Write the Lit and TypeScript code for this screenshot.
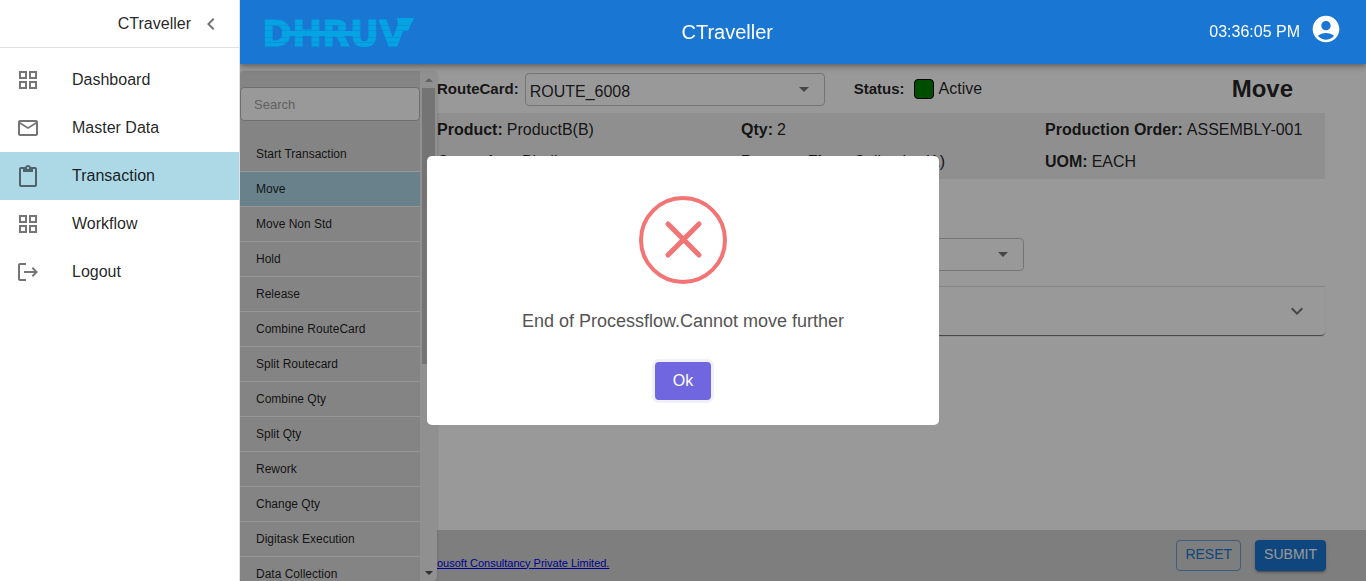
import { LitElement, html, css, svg } from "lit";
import { customElement, state } from "lit/decorators.js";
import { classMap } from "lit/directives/class-map.js";

const ICONS: Record<string, string> = {
  grid: "M3 3v8h8V3H3zm6 6H5V5h4v4zm-6 4v8h8v-8H3zm6 6H5v-4h4v4zm4-16v8h8V3h-8zm6 6h-4V5h4v4zm-6 4v8h8v-8h-8zm6 6h-4v-4h4v4z",
  mail: "M20 4H4c-1.1 0-1.99.9-1.99 2L2 18c0 1.1.9 2 2 2h16c1.1 0 2-.9 2-2V6c0-1.1-.9-2-2-2zm0 14H4V8l8 5 8-5v10zm-8-7L4 6h16l-8 5z",
  clipboard: "M19 3h-4.18C14.4 1.84 13.3 1 12 1c-1.3 0-2.4.84-2.82 2H5c-1.1 0-2 .9-2 2v16c0 1.1.9 2 2 2h14c1.1 0 2-.9 2-2V5c0-1.1-.9-2-2-2zm-7 0c.55 0 1 .45 1 1s-.45 1-1 1-1-.45-1-1 .45-1 1-1zm7 18H5V5h2v3h10V5h2v16z",
  logout: "M10 3H4c-1.1 0-2 .9-2 2v14c0 1.1.9 2 2 2h6v-2H4V5h6V3zM17 7l-1.4 1.4 2.6 2.6H8v2h10.2l-2.6 2.6L17 17l5-5z",
  left: "M15.41 7.41 14 6l-6 6 6 6 1.41-1.41L10.83 12z",
  down: "M16.59 8.59 12 13.17 7.41 8.59 6 10l6 6 6-6z",
  account: "M12 2C6.48 2 2 6.48 2 12s4.48 10 10 10 10-4.48 10-10S17.52 2 12 2zm0 4c1.93 0 3.5 1.57 3.5 3.5S13.93 13 12 13s-3.5-1.57-3.5-3.5S10.07 6 12 6zm0 14c-2.03 0-4.43-.82-6.14-2.88C7.55 15.8 9.68 15 12 15s4.45.8 6.14 2.12C16.43 19.18 14.03 20 12 20z",
};

const icon = (name: string, size = 24) => html`<svg
  width=${size} height=${size} viewBox="0 0 24 24" fill="currentColor" aria-hidden="true"
>${svg`<path d=${ICONS[name]}></path>`}</svg>`;

const NAV = [
  ["grid", "Dashboard"],
  ["mail", "Master Data"],
  ["clipboard", "Transaction"],
  ["grid", "Workflow"],
  ["logout", "Logout"],
];

const TRANSACTIONS = [
  "Start Transaction", "Move", "Move Non Std", "Hold", "Release",
  "Combine RouteCard", "Split Routecard", "Combine Qty", "Split Qty",
  "Rework", "Change Qty", "Digitask Execution", "Data Collection",
];

const DETAILS = [
  ["Product:", "ProductB(B)"],
  ["Qty:", "2"],
  ["Production Order:", "ASSEMBLY-001"],
  ["Operation:", "Binding"],
  ["Process Flow:", "Collection(A)"],
  ["UOM:", "EACH"],
];

@customElement("app-root")
export class AppRoot extends LitElement {
  @state() private section = "Transaction";
  @state() private active = "Move";
  @state() private dialogOpen = true;

  static styles = css`
    * { box-sizing: border-box; }
    :host {
      display: grid;
      grid-template-columns: 240px minmax(0, 1fr);
      height: 100vh;
      overflow: hidden;
      background: #fff;
      color: rgba(0, 0, 0, 0.87);
      font: 16px/24px "Liberation Sans", Arial, sans-serif;
    }
    svg { display: block; flex: none; }
    button, input, select { font: inherit; color: inherit; }
    button { cursor: pointer; }
    a { color: inherit; text-decoration: none; }
    ul { list-style: none; margin: 0; padding: 0; }

    .drawer {
      position: relative;
      z-index: 4;
      background: #fff;
      border-right: 1px solid #e0e0e0;
    }
    .drawer-head {
      display: flex;
      align-items: center;
      justify-content: flex-end;
      gap: 8px;
      height: 48px;
      padding-right: 16px;
      border-bottom: 1px solid #e0e0e0;
    }
    .collapse {
      padding: 0;
      border: 0;
      background: none;
      color: rgba(0, 0, 0, 0.54);
    }
    .nav { padding: 8px 0; }
    .nav-link {
      display: flex;
      align-items: center;
      gap: 32px;
      height: 48px;
      padding: 0 16px;
    }
    .nav-link svg { color: rgba(0, 0, 0, 0.54); }
    .selected { background: lightblue; }

    .workspace {
      display: flex;
      flex-direction: column;
      min-height: 0;
    }
    .bar {
      position: relative;
      z-index: 3;
      flex: none;
      display: grid;
      grid-template-columns: 20fr auto 27fr;
      align-items: center;
      height: 64px;
      padding: 0 24px 0 20px;
      background: #1976d2;
      color: #fff;
      box-shadow: 0 2px 4px -1px rgba(0, 0, 0, 0.2),
        0 4px 5px 0 rgba(0, 0, 0, 0.14), 0 1px 10px 0 rgba(0, 0, 0, 0.12);
    }
    .wordmark {
      font: bold 36px "DejaVu Sans", sans-serif;
    }
    .title {
      margin: 0;
      font-size: 20px;
      font-weight: 500;
    }
    .session {
      display: flex;
      align-items: center;
      justify-content: flex-end;
      gap: 10px;
    }
    .account {
      padding: 0 0 6px;
      border: 0;
      background: none;
      color: #fff;
    }

    .body {
      flex: 1;
      min-height: 0;
      display: grid;
      grid-template-columns: 197px minmax(0, 1fr);
      grid-template-rows: minmax(0, 1fr) auto;
    }
    .side {
      grid-area: 1 / 1 / 3 / 2;
      position: relative;
      z-index: 1;
      display: flex;
      margin-top: 7px;
      border-radius: 4px;
      overflow: hidden;
      background: #f1f1f1;
      box-shadow: 0 1px 3px rgba(0, 0, 0, 0.2);
    }
    .side-list {
      width: 180px;
      padding-top: 16px;
      background: #dcdcdc;
      overflow: hidden;
    }
    .search {
      display: block;
      width: 100%;
      height: 34px;
      margin-bottom: 16px;
      padding: 0 13px;
      border: 1px solid #b8b8b8;
      border-radius: 4px;
      background: #fff;
      font-size: 13px;
    }
    .search::placeholder { color: #a2a2a2; opacity: 1; }
    .side-link {
      display: flex;
      align-items: center;
      height: 35px;
      padding: 0 16px;
      border-bottom: 1px solid #fafafa;
      font-size: 12px;
    }
    .track {
      flex: 1;
      display: flex;
      flex-direction: column;
      align-items: center;
      padding: 7px 2px 6px;
    }
    .thumb {
      width: 13px;
      height: 276px;
      margin-top: 6px;
      margin-bottom: auto;
      background: #c1c1c1;
    }
    .arrow-up { color: #a3a3a3; }
    .arrow-down { color: #505050; }

    .content { padding: 9px 41px 0 0; }
    .top {
      display: flex;
      align-items: flex-start;
      height: 33px;
      line-height: 31px;
    }
    .caption {
      font-size: 15px;
      font-weight: bold;
    }
    .picker {
      position: relative;
      display: flex;
      align-items: center;
      justify-content: flex-end;
    }
    .select {
      appearance: none;
      width: 300px;
      height: 33px;
      padding: 4px 32px 0 4px;
      border: 1px solid #c4c4c4;
      border-radius: 4px;
      background: transparent;
      line-height: 24px;
    }
    .caret {
      position: absolute;
      right: 16px;
      color: rgba(0, 0, 0, 0.54);
      pointer-events: none;
    }
    .top .picker { margin-left: 6px; }
    .status {
      display: flex;
      align-items: center;
      margin-left: 29px;
    }
    .lamp {
      width: 20px;
      height: 20px;
      margin: 0 5px 0 9px;
      border: 1px solid #000;
      border-radius: 4px;
      background: green;
    }
    .heading {
      margin: 0 32px 0 auto;
      font-size: 24px;
    }
    .details {
      display: grid;
      grid-template-columns: 1fr 1fr 280px;
      margin: 7px 0 0;
      padding: 1px 0;
      background: #eee;
      line-height: 32px;
    }
    .detail { display: flex; gap: 4px; }
    .detail dt { font-weight: bold; }
    .detail dd { margin: 0; }
    .reason {
      display: flex;
      padding: 59px 0 15px 287px;
    }
    .panel {
      display: flex;
      align-items: center;
      justify-content: flex-end;
      width: 100%;
      height: 49px;
      padding: 0 16px;
      border: 0;
      border-top: 1px solid #dedede;
      border-radius: 0 0 4px 4px;
      background: #fff;
      color: rgba(0, 0, 0, 0.54);
      box-shadow: 0 2px 1px -1px rgba(0, 0, 0, 0.4),
        0 1px 1px 0 rgba(0, 0, 0, 0.28);
    }

    .footer {
      grid-area: 2 / 1 / 3 / 3;
      display: flex;
      align-items: center;
      gap: 14px;
      height: 51px;
      padding: 0 40px 0 197px;
      background: lightgray;
    }
    .company {
      margin: 14px auto 0 0;
      color: #0000ee;
      font-size: 11px;
      line-height: 16px;
      text-decoration: underline;
    }
    .btn {
      height: 31px;
      padding: 0 9px 3px;
      border-radius: 4px;
      font-size: 14px;
      line-height: 20px;
    }
    .outlined {
      padding: 0 8px 3px;
      border: 1px solid rgba(25, 118, 210, 0.6);
      background: transparent;
      color: #1976d2;
    }
    .contained {
      border: 0;
      background: #1976d2;
      color: #fff;
      box-shadow: 0 3px 1px -2px rgba(0, 0, 0, 0.2),
        0 2px 2px 0 rgba(0, 0, 0, 0.14), 0 1px 5px 0 rgba(0, 0, 0, 0.12);
    }

    .backdrop {
      position: fixed;
      inset: 0;
      z-index: 2;
      background: rgba(0, 0, 0, 0.4);
    }
    .stage {
      position: fixed;
      inset: 0;
      z-index: 5;
      display: grid;
      place-items: center;
    }
    .dialog {
      display: flex;
      flex-direction: column;
      align-items: center;
      width: 512px;
      max-width: 100%;
      padding: 40px 16px 25px;
      border-radius: 5px;
      background: #fff;
      color: #545454;
    }
    .message {
      margin: 25px 0 28px;
      font-size: 18px;
      line-height: 25px;
    }
    .ok {
      height: 38px;
      padding: 0 18px;
      border: 0;
      border-radius: 4px;
      outline: none;
      background: #7066e0;
      color: #fff;
      box-shadow: 0 0 0 3px #f0effc;
    }
  `;

  private caret() {
    return html`<svg class="caret" width="10" height="5" viewBox="0 0 10 5" fill="currentColor" aria-hidden="true">
      <path d="M0 0h10L5 5z"></path>
    </svg>`;
  }

  private wordmark() {
    const seams = [25, 30, 37, 42];
    return html`<svg width="164" height="64" viewBox="0 0 164 64" role="img" aria-label="Dhruv">
      <text class="wordmark" x="2" y="46" fill="#04a4e3" stroke="#04a4e3" stroke-width="1">DHRUV</text>
      <path d="M137 18h17l-6 13h-9z" fill="#04a4e3"></path>
      <rect x="22" y="31" width="72" height="5" fill="#04a4e3"></rect>
      ${seams.map((y) => svg`<rect x="0" y=${y} width="164" height="1" fill="#1976d2" opacity="0.4"></rect>`)}
    </svg>`;
  }

  render() {
    return html`
      <aside class="drawer">
        <div class="drawer-head">
          <span>CTraveller</span>
          <button class="collapse" aria-label="Collapse menu">${icon("left")}</button>
        </div>
        <ul class="nav">
          ${NAV.map(([glyph, label]) => html`<li>
            <a
              href="#"
              class=${classMap({ "nav-link": true, selected: label === this.section })}
              @click=${() => (this.section = label)}
            >${icon(glyph)}<span>${label}</span></a>
          </li>`)}
        </ul>
      </aside>

      <div class="workspace">
        <header class="bar">
          ${this.wordmark()}
          <h1 class="title">CTraveller</h1>
          <div class="session">
            <span>03:36:05 PM</span>
            <button class="account" aria-label="Account">${icon("account", 32)}</button>
          </div>
        </header>

        <div class="body">
          <nav class="side" aria-label="Transactions">
            <div class="side-list">
              <input class="search" type="search" placeholder="Search" aria-label="Search" />
              <ul>
                ${TRANSACTIONS.map((name) => html`<li>
                  <a
                    href="#"
                    class=${classMap({ "side-link": true, selected: name === this.active })}
                    @click=${() => (this.active = name)}
                  >${name}</a>
                </li>`)}
              </ul>
            </div>
            <div class="track" aria-hidden="true">
              <svg class="arrow-up" width="8" height="4" viewBox="0 0 8 4" fill="currentColor"><path d="M0 4h8L4 0z"></path></svg>
              <div class="thumb"></div>
              <svg class="arrow-down" width="8" height="4" viewBox="0 0 8 4" fill="currentColor"><path d="M0 0h8L4 4z"></path></svg>
            </div>
          </nav>

          <main class="content">
            <div class="top">
              <label class="caption" for="route">RouteCard:</label>
              <div class="picker">
                <select class="select" id="route"><option>ROUTE_6008</option></select>
                ${this.caret()}
              </div>
              <div class="status">
                <span class="caption">Status:</span>
                <span class="lamp"></span>
                <span>Active</span>
              </div>
              <h2 class="heading">Move</h2>
            </div>
            <dl class="details">
              ${DETAILS.map(([term, value]) => html`<div class="detail"><dt>${term}</dt><dd>${value}</dd></div>`)}
            </dl>
            <div class="reason">
              <div class="picker">
                <select class="select" aria-label="Next operation"><option></option></select>
                ${this.caret()}
              </div>
            </div>
            <button class="panel" aria-label="Expand details">${icon("down")}</button>
          </main>

          <footer class="footer">
            <a class="company" href="#">ousoft Consultancy Private Limited.</a>
            <button class="btn outlined">RESET</button>
            <button class="btn contained">SUBMIT</button>
          </footer>
        </div>
      </div>

      ${this.dialogOpen
        ? html`<div class="backdrop"></div>
            <div class="stage">
              <div class="dialog" role="alertdialog" aria-modal="true" aria-labelledby="message">
                <svg width="88" height="88" viewBox="0 0 88 88" fill="none" stroke="#f27474" aria-hidden="true">
                  <circle cx="44" cy="44" r="42" stroke-width="4"></circle>
                  <path d="M29 28l31 31M60 28L29 59" stroke-width="5" stroke-linecap="round"></path>
                </svg>
                <p class="message" id="message">End of Processflow.Cannot move further</p>
                <button class="ok" @click=${() => (this.dialogOpen = false)}>Ok</button>
              </div>
            </div>`
        : null}
    `;
  }
}
